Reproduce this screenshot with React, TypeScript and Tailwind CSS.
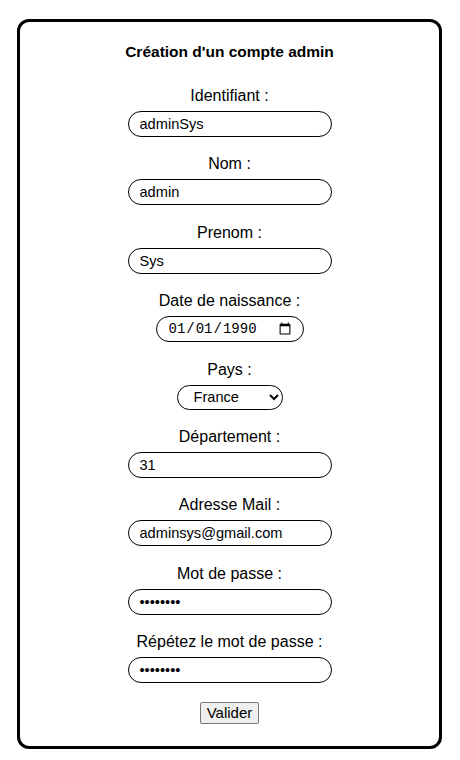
import React from "react";

const sans = { fontFamily: '"Liberation Sans", Arial, sans-serif' };

const inputClass =
  "h-[26px] w-[204px] rounded-full border border-black bg-white px-[11px] text-[14.6px] text-black outline-none";

function Field({ label, children }: { label: string; children: React.ReactNode }) {
  return (
    <div className="flex flex-col items-center">
      <label className="mb-[6px] text-[16px] leading-[18px] text-black">{label}</label>
      {children}
    </div>
  );
}

export default function App() {
  return (
    <div className="min-h-[760px] bg-white pt-[19px]" style={sans}>
      <form
        onSubmit={(e) => e.preventDefault()}
        className="ml-[17px] flex w-[425px] flex-col items-center gap-[18.4px] rounded-[12px] border-[3px] border-black px-4 pb-[22px] pt-[21px]"
      >
        <h1 className="mb-[7.6px] text-[15.5px] font-bold leading-[18px] text-black">
          Création d'un compte admin
        </h1>
        <Field label="Identifiant :">
          <input className={inputClass} type="text" defaultValue="adminSys" />
        </Field>
        <Field label="Nom :">
          <input className={inputClass} type="text" defaultValue="admin" />
        </Field>
        <Field label="Prenom :">
          <input className={inputClass} type="text" defaultValue="Sys" />
        </Field>
        <Field label="Date de naissance :">
          <input
            type="date"
            defaultValue="1990-01-01"
            className="h-[26px] w-[148px] rounded-full border border-black bg-white pl-[11px] pr-[9px] text-[14px] text-black outline-none"
            style={{ fontFamily: '"Liberation Mono", "Courier New", monospace' }}
          />
        </Field>
        <Field label="Pays :">
          <select
            defaultValue="France"
            className="h-[25px] w-[106px] rounded-full border border-black bg-white pl-[12px] pr-[5px] text-[14.6px] text-black outline-none"
          >
            <option>France</option>
            <option>Belgique</option>
            <option>Suisse</option>
          </select>
        </Field>
        <Field label="Département :">
          <input className={inputClass} type="text" defaultValue="31" />
        </Field>
        <Field label="Adresse Mail :">
          <input className={inputClass} type="email" defaultValue="adminsys@gmail.com" />
        </Field>
        <Field label="Mot de passe :">
          <input className={inputClass} type="password" defaultValue="12345678" />
        </Field>
        <Field label="Répétez le mot de passe :">
          <input className={inputClass} type="password" defaultValue="12345678" />
        </Field>
        <button
          type="submit"
          className="h-[22px] rounded-[2px] border border-[#767676] bg-[#efefef] px-[6px] text-[15px] leading-[18px] text-black"
        >
          Valider
        </button>
      </form>
    </div>
  );
}
